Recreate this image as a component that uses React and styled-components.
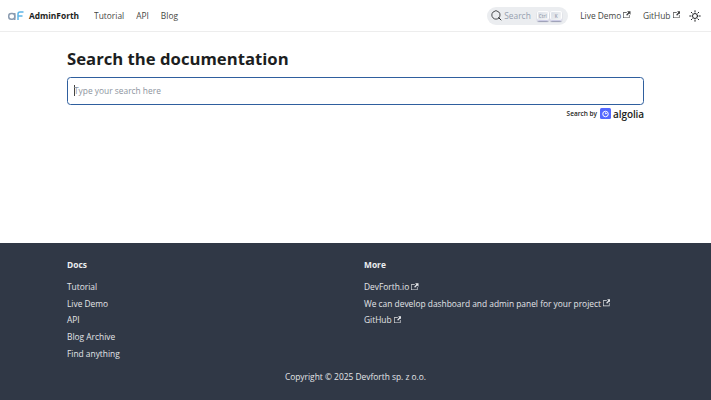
import React from 'react';
import styled, { createGlobalStyle } from 'styled-components';

const Global = createGlobalStyle`
  html, body { margin: 0; padding: 0; background: #fff; }
  body { font-family: "Open Sans", "Noto Sans", sans-serif; color: #1c1e21; }
  a { text-decoration: none; color: inherit; }
`;

const Page = styled.div`
  width: 711px; height: 400px; display: flex; flex-direction: column; overflow: hidden;
`;
const Navbar = styled.nav`
  height: 32px; box-sizing: border-box; flex: none; display: flex; align-items: center; padding: 0 10px 0 8px;
  border-bottom: 1px solid #ededed;
`;
const Brand = styled.a`
  display: flex; align-items: center; gap: 5px; font-size: 8.4px; font-weight: 700; color: #1c1e21; margin-right: 15px;
`;
const NavLink = styled.a`
  display: inline-flex; align-items: center; gap: 2px; font-size: 8.4px; color: #1c1e21; opacity: .85;
  margin-right: ${p => p.$gap ?? 12}px;
`;
const Spacer = styled.div`flex: 1;`;
const SearchPill = styled.div`
  width: 81px; height: 18px; border-radius: 9px; background: #ebedf0; display: flex; align-items: center;
  padding-left: 4px; box-sizing: border-box; font-size: 8.4px; color: #969faf; margin-right: 12px;
`;
const SearchLabel = styled.span`margin-left: 2px; margin-right: 6px;`;
const Key = styled.span`
  width: 12px; height: 10px; margin-right: 1.5px; border-radius: 2px; box-sizing: border-box;
  background: linear-gradient(-225deg, #d5dbe4, #f8f8f8);
  box-shadow: inset 0 -1px 0 #cdcde6, inset 0 0 1px 1px #fff, 0 1px 1px rgba(30,35,90,.4);
  display: flex; align-items: center; justify-content: center; font-size: 4.5px; font-weight: 600; color: #969faf;
`;
const Main = styled.main`
  flex: 1; padding: 0 67px; display: flex; flex-direction: column;
`;
const Title = styled.h1`
  margin: 14px 0 6px; font-size: 16.7px; line-height: 25px; font-weight: 700; color: #1c1e21;
`;
const SearchBox = styled.div`
  height: 27.5px; box-sizing: border-box; border: 1.5px solid #2f5f9e; border-radius: 3.5px;
  display: flex; align-items: center; padding-left: 6px; font-size: 8.4px; color: #8d949e;
`;
const Caret = styled.span`width: 1px; height: 11px; background: #444; margin-right: -1px;`;
const Attribution = styled.div`
  display: flex; justify-content: flex-end; align-items: center; gap: 3px; margin-top: 2.5px; height: 13px;
  font-size: 6.5px; font-weight: 600; color: #1c1e21;
`;
const AlgoliaMark = styled.span`
  font-size: 10px; font-weight: 600; color: #1c1e21; letter-spacing: -.1px; margin-left: -1px;
`;
const Footer = styled.footer`
  height: 157px; flex: none; background: #303846; color: #ebedf0; padding: 14px 67px 0; box-sizing: border-box;
  display: flex; flex-direction: column;
`;
const Columns = styled.div`display: grid; grid-template-columns: 297px 1fr;`;
const Column = styled.div`display: flex; flex-direction: column;`;
const ColTitle = styled.div`font-size: 8.4px; font-weight: 700; line-height: 16px; color: #ebedf0; margin-bottom: 6px;`;
const FootLink = styled.a`
  font-size: 8.4px; line-height: 16.65px; color: #e3e5e8; display: flex; align-items: center; gap: 2px; white-space: nowrap;
`;
const Copyright = styled.div`
  font-size: 8.4px; line-height: 14px; text-align: center; margin-top: 7.5px; color: #e3e5e8;
`;

const Ext = ({ c = 'currentColor' }) => (
  <svg width="7.5" height="7.5" viewBox="0 0 24 24" style={{ marginTop: -2 }}>
    <path fill={c} d="M21 13v10h-21v-19h12v2h-10v15h17v-8h2zm3-12h-10.988l4.035 4-6.977 7.07 2.828 2.828 6.977-7.07 4.125 4.172v-11z" />
  </svg>
);

const Logo = () => (
  <svg width="16" height="9" viewBox="0 0 32 18" fill="none">
    <rect x="1.5" y="5" width="12" height="11.5" rx="5" stroke="#8a9bb0" strokeWidth="3" />
    <path d="M13.5 4v14" stroke="#8a9bb0" strokeWidth="3" />
    <path d="M20 18V6a4 4 0 0 1 4-4h7M20 10h9" stroke="#5db5e8" strokeWidth="3" />
  </svg>
);

const SearchIcon = () => (
  <svg width="11" height="11" viewBox="0 0 20 20" fill="none">
    <path d="M14.386 14.386l4.088 4.088-4.088-4.088A7.533 7.533 0 1 1 3.733 3.733a7.533 7.533 0 0 1 10.653 10.653z" stroke="#1c1e21" strokeWidth="1.4" strokeLinecap="round" strokeLinejoin="round" />
  </svg>
);

const Sun = () => (
  <svg width="12" height="12" viewBox="0 0 24 24" fill="none" stroke="#1c1e21" strokeWidth="2" strokeLinecap="round">
    <circle cx="12" cy="12" r="5" />
    <path d="M12 1.5v2.5M12 20v2.5M1.5 12H4M20 12h2.5M4.6 4.6l1.7 1.7M17.7 17.7l1.7 1.7M4.6 19.4l1.7-1.7M17.7 6.3l1.7-1.7" />
  </svg>
);

const AlgoliaIcon = () => (
  <svg width="11" height="11" viewBox="0 0 22 22">
    <rect width="22" height="22" rx="3" fill="#5468ff" />
    <circle cx="11" cy="12" r="5.5" fill="none" stroke="#fff" strokeWidth="2" />
    <path d="M11 8.5v3.5l3-1.5" fill="none" stroke="#fff" strokeWidth="1.5" />
  </svg>
);

export default function App() {
  return (
    <Page>
      <Global />
      <Navbar>
        <Brand href="#"><Logo />AdminForth</Brand>
        <NavLink href="#">Tutorial</NavLink>
        <NavLink href="#">API</NavLink>
        <NavLink href="#">Blog</NavLink>
        <Spacer />
        <SearchPill>
          <SearchIcon />
          <SearchLabel>Search</SearchLabel>
          <Key>Ctrl</Key>
          <Key>K</Key>
        </SearchPill>
        <NavLink href="#" $gap={12}>Live Demo<Ext /></NavLink>
        <NavLink href="#" $gap={9}>GitHub<Ext /></NavLink>
        <Sun />
      </Navbar>
      <Main>
        <Title>Search the documentation</Title>
        <SearchBox><Caret />Type your search here</SearchBox>
        <Attribution>Search by <AlgoliaIcon /><AlgoliaMark>algolia</AlgoliaMark></Attribution>
      </Main>
      <Footer>
        <Columns>
          <Column>
            <ColTitle>Docs</ColTitle>
            <FootLink href="#">Tutorial</FootLink>
            <FootLink href="#">Live Demo</FootLink>
            <FootLink href="#">API</FootLink>
            <FootLink href="#">Blog Archive</FootLink>
            <FootLink href="#">Find anything</FootLink>
          </Column>
          <Column>
            <ColTitle>More</ColTitle>
            <FootLink href="#">DevForth.io<Ext /></FootLink>
            <FootLink href="#">We can develop dashboard and admin panel for your project<Ext /></FootLink>
            <FootLink href="#">GitHub<Ext /></FootLink>
          </Column>
        </Columns>
        <Copyright>Copyright © 2025 Devforth sp. z o.o.</Copyright>
      </Footer>
    </Page>
  );
}
